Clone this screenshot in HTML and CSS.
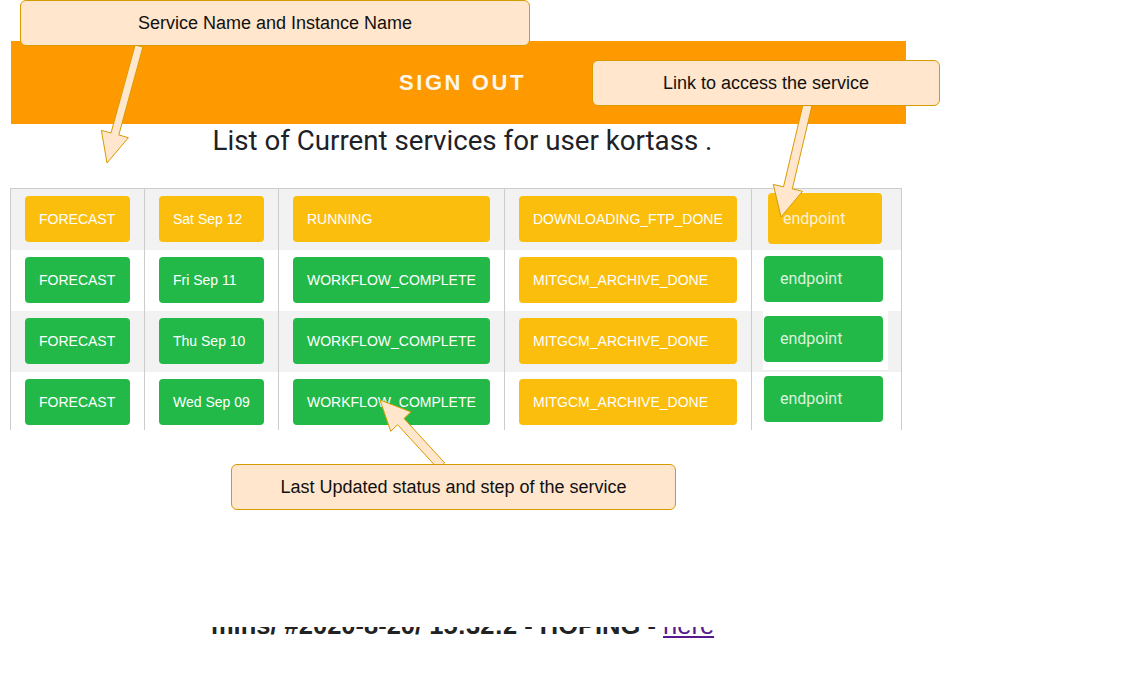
FILE: index.html
```html
<!DOCTYPE html>
<html lang="en">
<head>
<meta charset="utf-8">
<title>Current services</title>
<link rel="stylesheet" href="styles.css">
</head>
<body>
<div class="page">
  <header class="topbar"><span class="signout">SIGN OUT</span></header>
  <h1 class="title">List of Current services for user kortass .</h1>
  <div class="grid-wrap">
    <div class="row stripe">
      <div class="cell c1"><span class="btn yellow">FORECAST</span></div>
      <div class="cell c2"><span class="btn yellow">Sat Sep 12</span></div>
      <div class="cell c3"><span class="btn yellow">RUNNING</span></div>
      <div class="cell c4"><span class="btn yellow">DOWNLOADING_FTP_DONE</span></div>
      <div class="cell c5"><span class="ep yellow ep-first">endpoint</span></div>
    </div>
    <div class="row">
      <div class="cell c1"><span class="btn green">FORECAST</span></div>
      <div class="cell c2"><span class="btn green">Fri Sep 11</span></div>
      <div class="cell c3"><span class="btn green">WORKFLOW_COMPLETE</span></div>
      <div class="cell c4"><span class="btn yellow">MITGCM_ARCHIVE_DONE</span></div>
      <div class="cell c5"><span class="ep green ep-r2">endpoint</span></div>
    </div>
    <div class="row stripe">
      <div class="cell c1"><span class="btn green">FORECAST</span></div>
      <div class="cell c2"><span class="btn green">Thu Sep 10</span></div>
      <div class="cell c3"><span class="btn green">WORKFLOW_COMPLETE</span></div>
      <div class="cell c4"><span class="btn yellow">MITGCM_ARCHIVE_DONE</span></div>
      <div class="cell c5"><div class="ep-back"><span class="ep green ep-r3">endpoint</span></div></div>
    </div>
    <div class="row">
      <div class="cell c1"><span class="btn green">FORECAST</span></div>
      <div class="cell c2"><span class="btn green">Wed Sep 09</span></div>
      <div class="cell c3"><span class="btn green">WORKFLOW_COMPLETE</span></div>
      <div class="cell c4"><span class="btn yellow">MITGCM_ARCHIVE_DONE</span></div>
      <div class="cell c5"><span class="ep green ep-r4">endpoint</span></div>
    </div>
  </div>
  <div class="foot-clip">
    <p class="foot-text">mins/ #2020-8-20/ 15:32:2 - HOPING - <a href="#" class="foot-link">here</a></p>
  </div>
</div>

<svg class="arrows" width="1133" height="680" viewBox="0 0 1133 680" aria-hidden="true">
  <polygon points="135.1,45 111.0,133.0 101.4,130.3 107,163 128.4,137.7 118.8,135.0 142.9,47"/>
  <polygon points="803.1,104 783.5,186.8 773.3,184.4 781,217 802.5,191.3 792.3,188.8 811.9,106"/>
  <polygon points="438.3,469.1 397.6,424.7 390.7,431.3 380,400 410.9,411.9 404.0,418.5 444.7,462.9"/>
</svg>

<div class="callout callout-name">Service Name and Instance Name</div>
<div class="callout callout-link">Link to access the service</div>
<div class="callout callout-status">Last Updated status and step of the service</div>
</body>
</html>
```

FILE: styles.css
```css
html, body {
  margin: 0;
  padding: 0;
  background: #ffffff;
}

body {
  width: 1133px;
  height: 680px;
  overflow: hidden;
  position: relative;
  font-family: "Liberation Sans", Arial, sans-serif;
}

.page {
  padding-top: 41px;
}

.topbar {
  margin-left: 11px;
  width: 895px;
  height: 83px;
  background: #fe9a00;
  display: flex;
  align-items: center;
  justify-content: center;
  padding-left: 8px;
  box-sizing: border-box;
}

.signout {
  color: #fdf6ea;
  font-family: "Liberation Sans", Arial, sans-serif;
  font-weight: 700;
  font-size: 22px;
  letter-spacing: 2.6px;
}

.title {
  margin: 0;
  padding-left: 19px;
  width: 906px;
  box-sizing: border-box;
  text-align: center;
  font-family: Roboto, "Noto Sans", sans-serif;
  font-weight: 400;
  font-size: 27.7px;
  line-height: 33px;
  color: #1e2126;
}

.grid-wrap {
  margin-top: 31px;
  margin-left: 10px;
  width: 892px;
  height: 242px;
  overflow: hidden;
  border-top: 1px solid #cccccc;
  box-sizing: border-box;
}

.row {
  display: grid;
  grid-template-columns: 134px 134px 226px 247px 151px;
  height: 61px;
}

.row.stripe {
  background: #f2f2f2;
}

.cell {
  border-left: 1px solid #cccccc;
  padding: 7px 14px 8px 14px;
  box-sizing: border-box;
  display: flex;
}

.cell.c5 {
  border-right: 1px solid #cccccc;
  padding: 0;
  position: relative;
}

.btn {
  flex: 1;
  height: 46px;
  border-radius: 4px;
  color: #ffffff;
  font-size: 14px;
  display: flex;
  align-items: center;
  padding-left: 14px;
  white-space: nowrap;
}

.yellow {
  background: #fbbe0c;
}

.green {
  background: #22b948;
}

.ep {
  display: flex;
  align-items: center;
  padding-left: 16px;
  padding-bottom: 2px;
  box-sizing: border-box;
  width: 119px;
  height: 46px;
  border-radius: 4px;
  font-family: Roboto, "Liberation Sans", sans-serif;
  font-size: 16px;
  font-weight: 400;
  color: #d9f3dc;
}

.ep-first {
  margin: 4px 0 0 16px;
  width: 114px;
  height: 51px;
  padding-left: 15px;
  padding-bottom: 0;
  color: #fdf1d4;
}

.ep-r2 {
  margin: 6px 0 0 12px;
}

.ep-r3 {
  margin: 5px 0 0 1px;
}

.ep-r4 {
  margin: 4px 0 0 12px;
}

.ep-back {
  margin-left: 11px;
  width: 125px;
  height: 59px;
  background: #ffffff;
  border-bottom: 1px solid #eeeeee;
}

.foot-clip {
  display: flow-root;
  margin-top: 197px;
  height: 11px;
  overflow: hidden;
}

.foot-text {
  margin: -17px 0 0 0;
  padding-left: 19px;
  width: 906px;
  box-sizing: border-box;
  text-align: center;
  font-family: "Liberation Sans", Arial, sans-serif;
  font-weight: 700;
  font-size: 25.5px;
  line-height: 30px;
  color: #222222;
  white-space: nowrap;
}

.foot-link {
  color: #551a8b;
  font-weight: 400;
}

.arrows {
  position: absolute;
  left: 0;
  top: 0;
  pointer-events: none;
}

.arrows polygon {
  fill: #ffe6cc;
  stroke: #d79b00;
  stroke-width: 1;
  stroke-linejoin: miter;
}

.callout {
  position: absolute;
  box-sizing: border-box;
  background: #ffe6cc;
  border: 1px solid #d79b00;
  border-radius: 6px;
  display: flex;
  align-items: center;
  justify-content: center;
  font-family: "Liberation Sans", Arial, sans-serif;
  font-size: 18px;
  color: #111111;
}

.callout-name {
  left: 20px;
  top: 0;
  width: 510px;
  height: 46px;
}

.callout-link {
  left: 592px;
  top: 60px;
  width: 348px;
  height: 46px;
}

.callout-status {
  left: 231px;
  top: 464px;
  width: 445px;
  height: 46px;
}
```
